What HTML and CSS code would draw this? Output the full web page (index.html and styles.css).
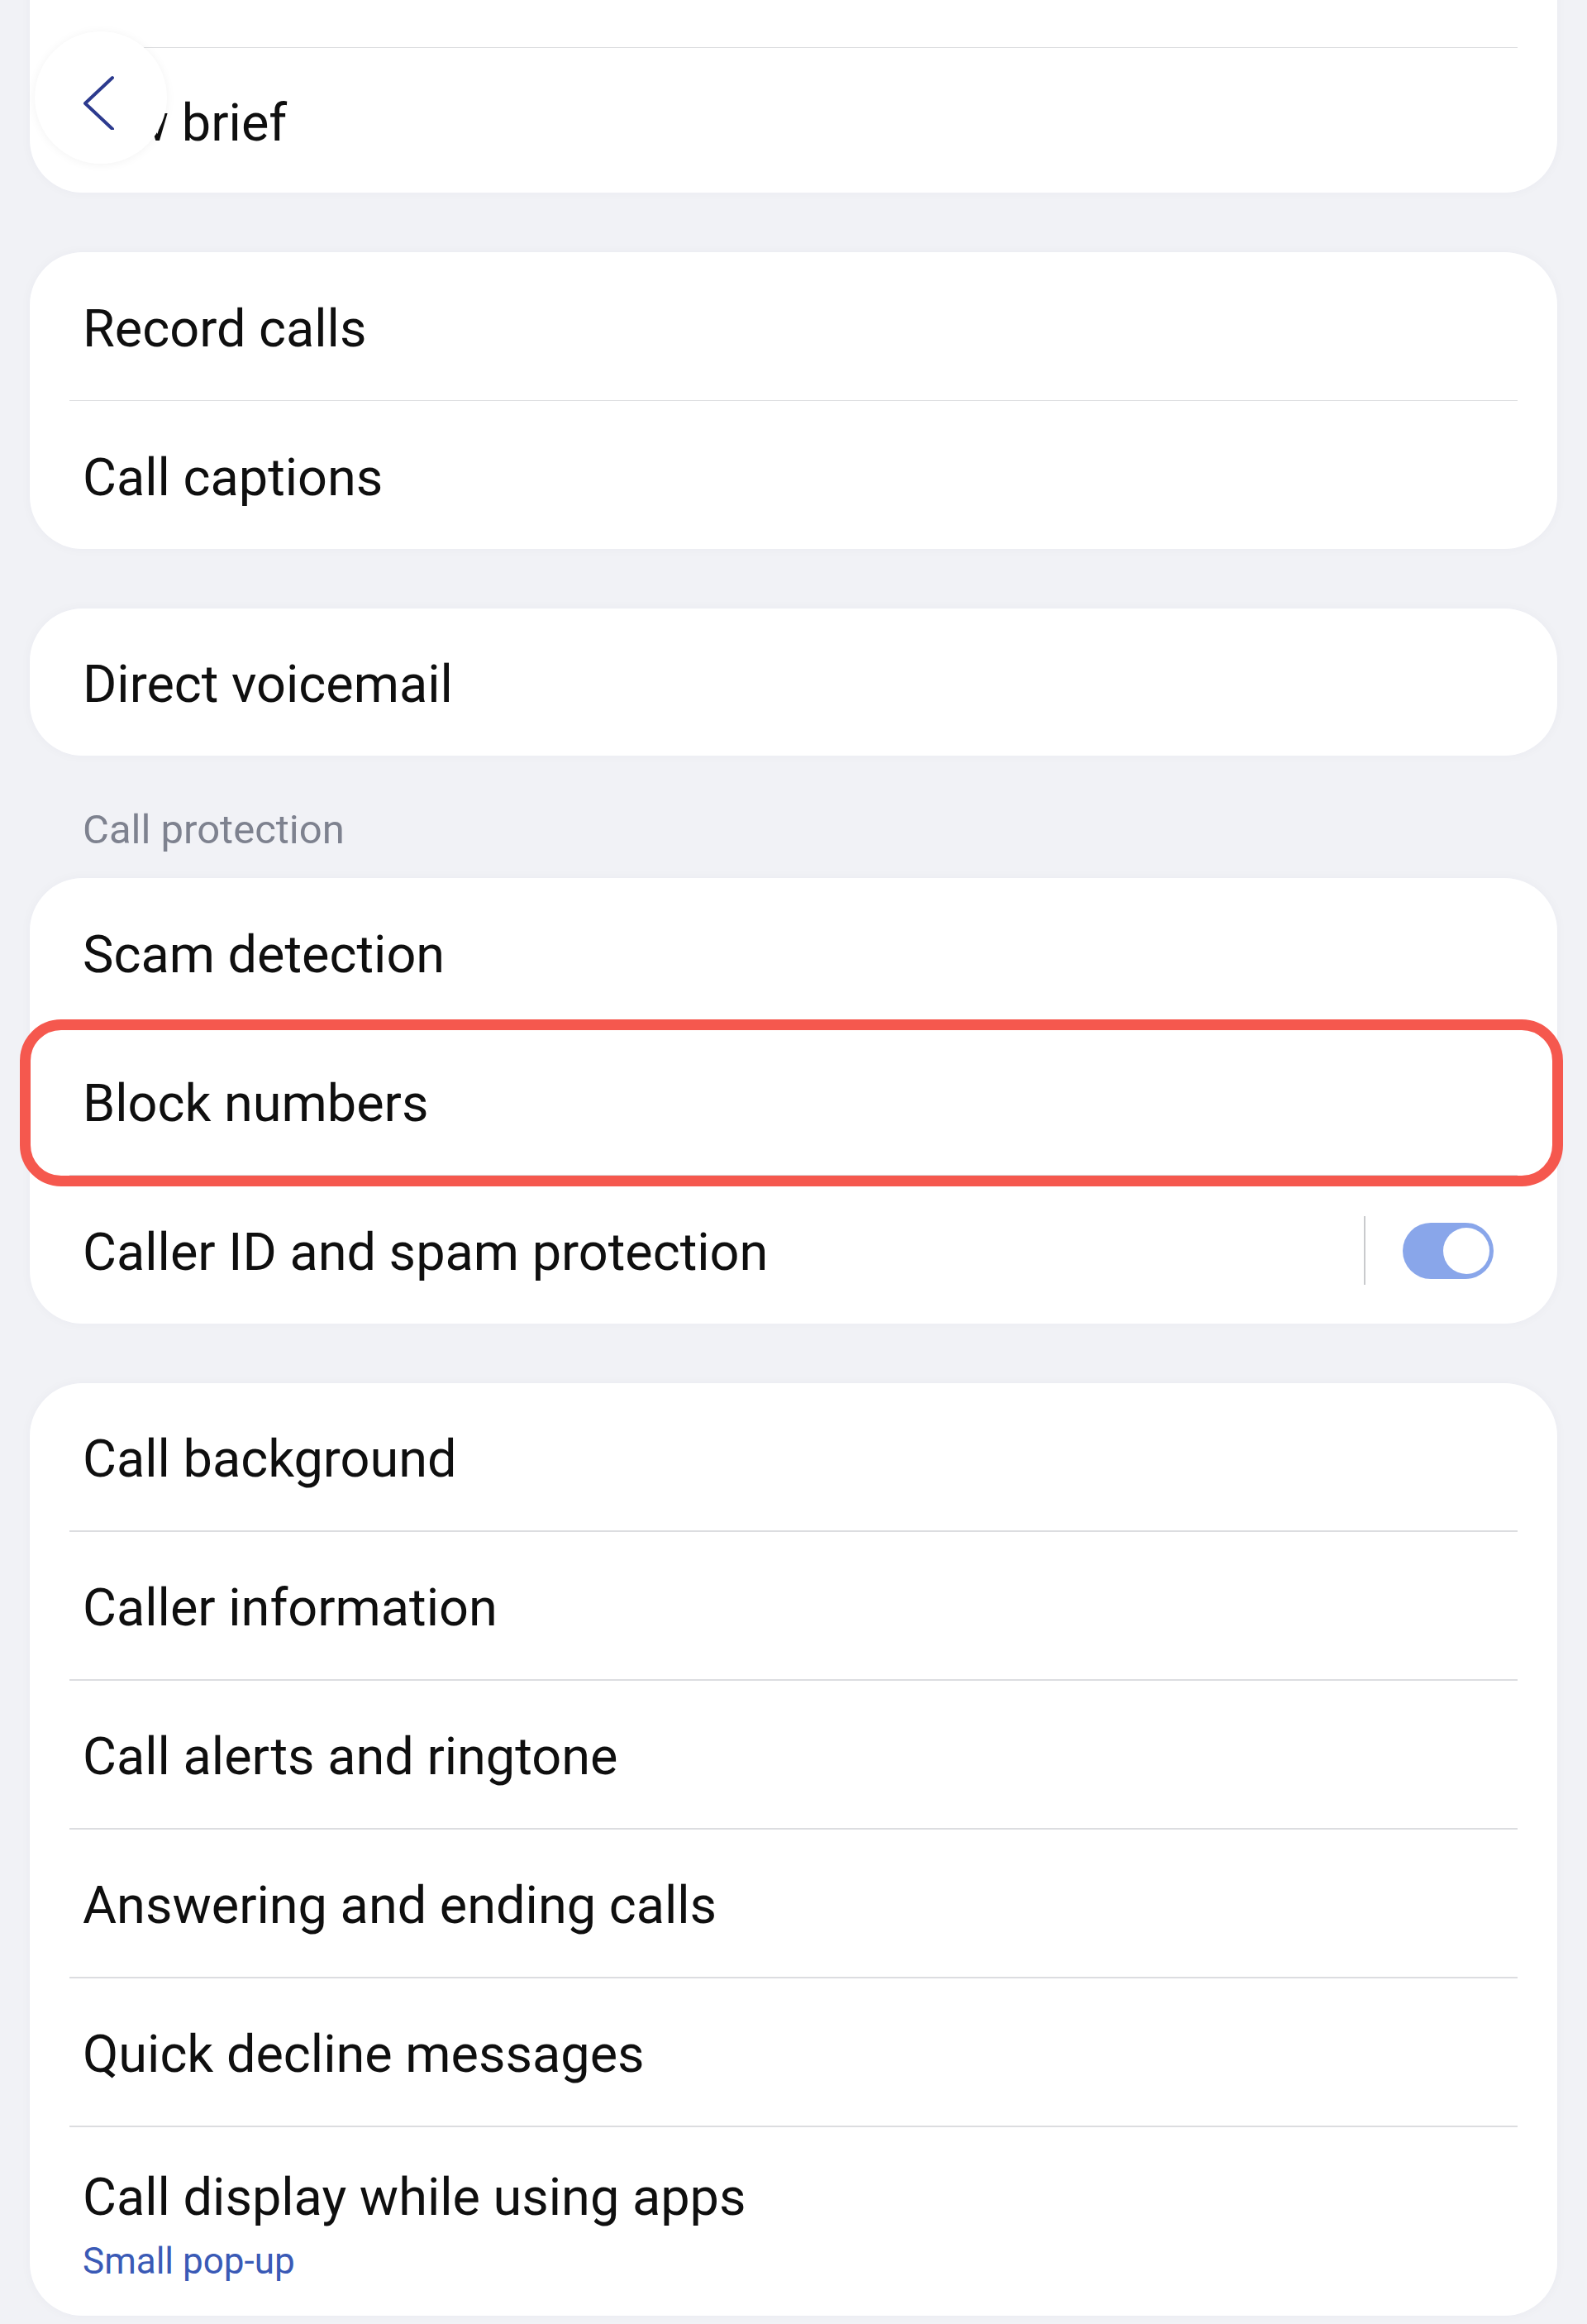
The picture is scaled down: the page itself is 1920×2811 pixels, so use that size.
FILE: index.html
```html
<!DOCTYPE html>
<html lang="en">
<head>
<meta charset="utf-8">
<title>Call settings</title>
<link rel="stylesheet" href="styles.css">
</head>
<body>
<div class="page">
  <button class="back" aria-label="Back">
    <svg width="60" height="80" viewBox="0 0 60 80"><polyline points="46,17 13,48 46,79" fill="none" stroke="#2c3a8e" stroke-width="4" stroke-linecap="round" stroke-linejoin="round"/></svg>
  </button>

  <div class="card card-top">
    <div class="row row-cut"></div>
    <div class="divider"></div>
    <div class="row row-short shifted"><span class="label">Now brief</span></div>
  </div>

  <div class="card">
    <div class="row"><span class="label">Record calls</span></div>
    <div class="divider"></div>
    <div class="row"><span class="label">Call captions</span></div>
  </div>

  <div class="card">
    <div class="row"><span class="label">Direct voicemail</span></div>
  </div>

  <div class="section-title">Call protection</div>

  <div class="card">
    <div class="row"><span class="label">Scam detection</span></div>
    <div class="divider"></div>
    <div class="row highlighted"><span class="label">Block numbers</span><span class="highlight"></span></div>
    <div class="divider"></div>
    <div class="row">
      <span class="label">Caller ID and spam protection</span>
      <span class="switch-wrap">
        <span class="vline"></span>
        <span class="switch"><span class="knob"></span></span>
      </span>
    </div>
  </div>

  <div class="card">
    <div class="row"><span class="label">Call background</span></div>
    <div class="divider"></div>
    <div class="row"><span class="label">Caller information</span></div>
    <div class="divider"></div>
    <div class="row"><span class="label">Call alerts and ringtone</span></div>
    <div class="divider"></div>
    <div class="row"><span class="label">Answering and ending calls</span></div>
    <div class="divider"></div>
    <div class="row"><span class="label">Quick decline messages</span></div>
    <div class="divider"></div>
    <div class="row row-two">
      <span class="label">Call display while using apps</span>
      <span class="sub">Small pop-up</span>
    </div>
  </div>
</div>
</body>
</html>
```

FILE: styles.css
```css
* { box-sizing: border-box; }

html, body {
  margin: 0;
  padding: 0;
  background: #f1f2f6;
}

body {
  font-family: Roboto, "Liberation Sans", Arial, sans-serif;
  color: #0f0f0f;
  overflow: hidden;
}

.page {
  position: relative;
  width: 1920px;
  height: 2811px;
  padding: 0 36px;
  overflow: hidden;
}

.card {
  background: #ffffff;
  border-radius: 64px;
  box-shadow: 0 0 14px rgba(30, 40, 80, 0.035);
  margin-top: 72px;
  position: relative;
}

.card-top {
  margin-top: -122px;
}

.row {
  height: 178.5px;
  display: flex;
  align-items: center;
  padding: 7px 77px 0 64px;
  position: relative;
}

.row-short { height: 175px; }

.shifted { padding-left: 40px; }

.label {
  font-size: 63px;
  line-height: 1.2;
  font-weight: 400;
  white-space: nowrap;
  flex: 1;
}

.divider {
  height: 1.5px;
  margin: 0 48px;
  background: #dcdde0;
}

.row-two {
  height: 228px;
  flex-direction: column;
  align-items: flex-start;
  justify-content: flex-start;
  padding-top: 49px;
  gap: 15px;
}

.row-two .label {
  flex: none;
  line-height: 72px;
}

.sub {
  font-size: 44px;
  line-height: 52px;
  color: #3a5ab6;
}

.section-title {
  font-size: 49px;
  line-height: 60px;
  color: #7e828f;
  padding: 60px 0 28px 64px;
}

.section-title + .card { margin-top: 0; }

.highlight {
  position: absolute;
  left: -12px;
  right: -7px;
  top: -9px;
  bottom: -14px;
  border: 13px solid #f5584e;
  border-radius: 50px;
  pointer-events: none;
}

.switch-wrap {
  display: flex;
  align-items: center;
  gap: 45px;
  flex: none;
  margin-top: -4px;
}

.vline {
  width: 2px;
  height: 83px;
  background: #c9cacd;
}

.switch {
  width: 110px;
  height: 68px;
  border-radius: 34px;
  background: #89a6ea;
  display: flex;
  align-items: center;
  justify-content: flex-end;
  padding: 0 5px;
}

.knob {
  width: 56px;
  height: 56px;
  border-radius: 50%;
  background: #ffffff;
}

.back {
  position: absolute;
  left: 42px;
  top: 38px;
  width: 160px;
  height: 160px;
  border-radius: 50%;
  border: none;
  padding: 0;
  background: #ffffff;
  box-shadow: 0 1px 12px rgba(0, 0, 0, 0.05);
  z-index: 5;
  display: flex;
  align-items: center;
  justify-content: center;
}

.back svg {
  display: block;
  margin-left: -4px;
  margin-top: -2px;
}
```
